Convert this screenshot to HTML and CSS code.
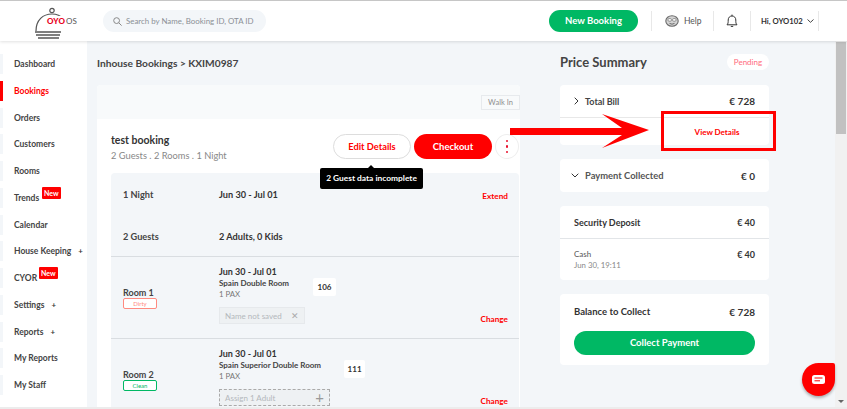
FILE: index.html
```html
<!DOCTYPE html>
<html lang="en">
  <head>
    <meta charset="UTF-8" />
    <title>Booking details</title>
    <link rel="stylesheet" href="styles.css">
  </head>
  <body>
    <div class="header">
      <div class="logo">
        <svg class="logo-bell" width="38" height="33" viewBox="0 0 38 33">
          <circle cx="19" cy="3.5" r="2.2" fill="none" stroke="#555" stroke-width="1.2" />
          <path d="M3 24 C3 13 10 7 19 7 C24 7 28 9 31 12" fill="none" stroke="#555" stroke-width="1.2" />
          <path d="M2 25 H28 M3 28 H27 M5 31 H26" stroke="#555" stroke-width="1.6" />
        </svg>
        <span class="logo-oyo">OYO</span>
        <span class="logo-os">OS</span>
      </div>
      <div class="search">
        <svg width="9" height="9" viewBox="0 0 9 9">
          <circle cx="3.6" cy="3.6" r="2.9" fill="none" stroke="#888" />
          <path d="M5.8 5.8 L8.6 8.6" stroke="#888" />
        </svg>
        <span>Search by Name, Booking ID, OTA ID</span>
      </div>
      <div class="btn-new">New Booking</div>
      <div class="head-item help">
        <svg width="14" height="12" viewBox="0 0 14 12">
          <ellipse cx="7" cy="6" rx="6.2" ry="5.3" fill="#d4d4d4" stroke="#6a6a6a" stroke-width="1.1" />
          <rect x="3" y="3.6" width="3.4" height="2.6" rx="1" fill="#fff" stroke="#6a6a6a" stroke-width="0.7" />
          <rect x="7.6" y="3.6" width="3.4" height="2.6" rx="1" fill="#fff" stroke="#6a6a6a" stroke-width="0.7" />
          <path d="M4.5 8.4 Q7 10 9.5 8.4" fill="none" stroke="#6a6a6a" />
        </svg>
        <span>Help</span>
      </div>
      <div class="head-item bell">
        <svg width="12" height="14" viewBox="0 0 12 14">
          <path d="M1 10.8 C2.2 9.6 2.2 8.4 2.2 6 C2.2 3.6 3.8 2 6 2 C8.2 2 9.8 3.6 9.8 6 C9.8 8.4 9.8 9.6 11 10.8 Z M6 0.6 V2 M4.8 12.4 H7.2" fill="none" stroke="#333" />
        </svg>
      </div>
      <div class="head-item user">
        <span>Hi, OYO102</span>
        <svg width="7" height="4" viewBox="0 0 7 4"><path d="M0.5 0.5 L3.5 3.3 L6.5 0.5" fill="none" stroke="#444" /></svg>
      </div>
    </div>

    <div class="page">
      <div class="sidebar">
        <div class="nav-item">Dashboard</div>
        <div class="nav-item active">Bookings</div>
        <div class="nav-item">Orders</div>
        <div class="nav-item">Customers</div>
        <div class="nav-item">Rooms</div>
        <div class="nav-item">Trends<span class="new new-trends">New</span></div>
        <div class="nav-item">Calendar</div>
        <div class="nav-item">House Keeping<span class="plus">+</span></div>
        <div class="nav-item">CYOR<span class="new new-cyor">New</span></div>
        <div class="nav-item">Settings<span class="plus">+</span></div>
        <div class="nav-item">Reports<span class="plus">+</span></div>
        <div class="nav-item">My Reports</div>
        <div class="nav-item">My Staff</div>
      </div>

      <div class="content">
        <div class="left">
          <div class="title">Inhouse Bookings &gt; KXIM0987</div>
          <div class="card">
            <div class="walk-band"><span class="walk">Walk In</span></div>
            <div class="card-body">
              <div class="book-head">
                <div>
                  <div class="book-name">test booking</div>
                  <div class="book-sub">2 Guests . 2 Rooms . 1 Night</div>
                </div>
                <div class="actions">
                  <div class="btn-edit">Edit Details</div>
                  <div class="btn-checkout">Checkout</div>
                  <div class="btn-more"><i></i><i></i><i></i></div>
                  <div class="tooltip">2 Guest data incomplete</div>
                </div>
              </div>

              <div class="panel">
                <div class="stay">
                  <div class="stay-row">
                    <span class="cell-a">1 Night</span>
                    <span class="cell-b">Jun 30 - Jul 01</span>
                    <span class="link">Extend</span>
                  </div>
                  <div class="stay-row">
                    <span class="cell-a">2 Guests</span>
                    <span class="cell-b">2 Adults, 0 Kids</span>
                  </div>
                </div>

                <div class="room">
                  <div class="room-label">
                    <div>Room 1</div>
                    <div class="badge dirty">Dirty</div>
                  </div>
                  <div class="room-info">
                    <div class="room-top">
                      <div>
                        <div class="room-date">Jun 30 - Jul 01</div>
                        <div class="room-type">Spain Double Room</div>
                        <div class="room-pax">1 PAX</div>
                      </div>
                      <div class="room-no">106</div>
                    </div>
                    <div class="guest-chip">Name not saved <span class="chip-x">&#10005;</span></div>
                  </div>
                  <div class="link change">Change</div>
                </div>

                <div class="room">
                  <div class="room-label">
                    <div>Room 2</div>
                    <div class="badge clean">Clean</div>
                  </div>
                  <div class="room-info">
                    <div class="room-top">
                      <div>
                        <div class="room-date">Jun 30 - Jul 01</div>
                        <div class="room-type">Spain Superior Double Room</div>
                        <div class="room-pax">1 PAX</div>
                      </div>
                      <div class="room-no no-2">111</div>
                    </div>
                    <div class="guest-chip assign">Assign 1 Adult <span class="chip-plus">+</span></div>
                  </div>
                  <div class="link change">Change</div>
                </div>
              </div>
            </div>
          </div>
        </div>

        <div class="right">
          <div class="price-head">
            <div class="price-title">Price Summary</div>
            <div class="pending">Pending</div>
          </div>

          <div class="box">
            <div class="box-row bill">
              <span class="row-name"><svg width="5" height="8" viewBox="0 0 5 8"><path d="M0.7 0.7 L4 4 L0.7 7.3" fill="none" stroke="#333" /></svg>Total Bill</span>
              <span class="amount">&euro; 728</span>
            </div>
            <div class="details-row"></div>
          </div>

          <div class="box">
            <div class="box-row collected">
              <span class="row-name"><svg width="8" height="5" viewBox="0 0 8 5"><path d="M0.7 0.7 L4 4 L7.3 0.7" fill="none" stroke="#333" /></svg>Payment Collected</span>
              <span class="amount">&euro; 0</span>
            </div>
          </div>

          <div class="box">
            <div class="box-row deposit">
              <span class="strong">Security Deposit</span>
              <span class="strong">&euro; 40</span>
            </div>
            <div class="box-row cash">
              <div>
                <div class="cash-name">Cash</div>
                <div class="cash-date">Jun 30, 19:11</div>
              </div>
              <span class="strong">&euro; 40</span>
            </div>
          </div>

          <div class="box balance">
            <div class="balance-row">
              <span class="strong balance-name">Balance to Collect</span>
              <span class="amount">&euro; 728</span>
            </div>
            <div class="btn-collect">Collect Payment</div>
          </div>
        </div>
      </div>

      <div class="scrollbar"><div class="thumb"></div></div>
    </div>

    <!-- annotation drawn on top of the screenshot -->
    <svg class="arrow" width="142" height="36" viewBox="0 0 142 36">
      <polygon points="0,15 112,15 92,1 139,17 92,35 112,22 0,22" fill="#f00" />
    </svg>
    <div class="callout">View Details</div>

    <div class="chat">
      <svg width="13" height="9" viewBox="0 0 13 9">
        <rect width="13" height="9" rx="2.5" fill="#fff" />
        <path d="M2.5 3 H10.5 M2.5 5.8 H8" stroke="#f00" />
      </svg>
    </div>
    <div class="bottom-line"></div>
  </body>
</html>
```

FILE: styles.css
```css
* {
  margin: 0;
  padding: 0;
  box-sizing: border-box;
}
html, body {
  height: 409px;
  overflow: hidden;
}
body {
  position: relative;
  display: flex;
  flex-direction: column;
  font-family: "Lato", "Liberation Sans", sans-serif;
  color: #333;
  background: #f3f6f9;
  border-top: 1px solid #c6c6c6;
}

/* header */
.header {
  height: 40px;
  flex: none;
  display: flex;
  align-items: center;
  background: #fff;
  box-shadow: 0 1px 3px rgba(0, 0, 0, 0.12);
  position: relative;
  z-index: 2;
}
.logo {
  width: 103px;
  height: 40px;
  padding: 5px 0 0 33px;
  display: flex;
  align-items: center;
  position: relative;
}
.logo-bell {
  flex: none;
}
.logo-oyo {
  position: absolute;
  left: 47px;
  top: 15px;
  background: #fff;
  font-size: 8px;
  line-height: 10px;
  font-weight: 900;
  letter-spacing: 0.2px;
  color: #e8001c;
}
.logo-os {
  position: absolute;
  left: 66px;
  top: 15px;
  font-size: 8px;
  line-height: 10px;
  color: #555;
}
.search {
  width: 163px;
  height: 22px;
  border-radius: 11px;
  background: #f3f6f9;
  display: flex;
  align-items: center;
  gap: 4px;
  padding-left: 10px;
  font-size: 7.9px;
  color: #8b9096;
}
.btn-new {
  width: 89px;
  height: 22px;
  margin-left: 283px;
  border-radius: 11px;
  background: #00b864;
  color: #fff;
  font-size: 9.5px;
  font-weight: 700;
  text-align: center;
  line-height: 22px;
}
.head-item {
  height: 20px;
  display: flex;
  align-items: center;
  border-left: 1px solid #e8e8e8;
}
.help {
  width: 62px;
  margin-left: 13px;
  padding-left: 13px;
  gap: 5px;
  font-size: 8.5px;
  color: #555;
}
.bell {
  width: 37px;
  padding-left: 12px;
}
.user {
  width: 69px;
  padding-left: 10px;
  gap: 4px;
  font-size: 7.7px;
  font-weight: 700;
  border-right: 1px solid #e8e8e8;
}

/* sidebar */
.page {
  flex: 1;
  display: flex;
  min-height: 0;
}
.sidebar {
  width: 87px;
  flex: none;
  background: #fff;
  padding-top: 13px;
  display: flex;
  flex-direction: column;
  gap: 6.75px;
}
.nav-item {
  height: 20px;
  display: flex;
  align-items: center;
  border-left: 3px solid #f3f6f9;
  padding-left: 11px;
  font-size: 8.5px;
  font-weight: 700;
  color: #444;
  white-space: nowrap;
  position: relative;
}
.nav-item.active {
  border-left-color: #f00;
  color: #f00;
}
.plus {
  margin-left: 7px;
  font-size: 8px;
  color: #333;
}
.new {
  position: absolute;
  top: -1px;
  background: #f00;
  color: #fff;
  font-size: 7px;
  font-weight: 700;
  line-height: 12px;
  padding: 0 2px;
  border-radius: 1px;
}
.new-trends {
  left: 39px;
}
.new-cyor {
  left: 36px;
}

/* main column */
.content {
  flex: 1;
  display: flex;
  gap: 40px;
  padding-left: 10px;
  min-width: 0;
}
.left {
  width: 423px;
  flex: none;
}
.title {
  height: 44px;
  padding-top: 14px;
  font-size: 10.2px;
  line-height: 16px;
  font-weight: 700;
  color: #444;
}
.card {
  background: #fff;
  border-radius: 4px;
}
.walk-band {
  height: 34px;
  background: #f8fafb;
  border-radius: 4px 4px 0 0;
  display: flex;
  justify-content: flex-end;
  align-items: center;
}
.walk {
  width: 39px;
  height: 15px;
  border: 1px solid #e7eaed;
  color: #8f8f8f;
  font-size: 7.5px;
  font-weight: 400;
  text-align: center;
  line-height: 13px;
}
.card-body {
  padding: 15px 1px 0 14px;
}
.book-head {
  height: 39px;
  display: flex;
  justify-content: space-between;
}
.book-name {
  font-size: 10.5px;
  line-height: 12px;
  font-weight: 700;
  color: #333;
}
.book-sub {
  margin-top: 4px;
  font-size: 9.3px;
  line-height: 12px;
  color: #888;
}
.actions {
  display: flex;
  gap: 3px;
  height: 25px;
  position: relative;
}
.btn-edit {
  width: 78px;
  border: 1px solid #ddd;
  border-radius: 13px;
  color: #f00;
  font-size: 9.3px;
  font-weight: 700;
  text-align: center;
  line-height: 23px;
}
.btn-checkout {
  width: 78px;
  border-radius: 13px;
  background: #f00;
  color: #fff;
  font-size: 9.5px;
  font-weight: 700;
  text-align: center;
  line-height: 25px;
}
.btn-more {
  width: 24px;
  border: 1px solid #eee;
  border-radius: 50%;
  display: flex;
  flex-direction: column;
  align-items: center;
  justify-content: center;
  gap: 3px;
}
.btn-more i {
  width: 2.5px;
  height: 2.5px;
  border-radius: 50%;
  background: #e8112d;
}
.tooltip {
  position: absolute;
  left: -13px;
  top: 34px;
  width: 103px;
  height: 21px;
  background: #000;
  color: #fff;
  border-radius: 2px;
  font-size: 8.4px;
  font-weight: 700;
  text-align: center;
  line-height: 21px;
  z-index: 3;
}
.tooltip::before {
  content: "";
  position: absolute;
  left: 48px;
  top: -3px;
  border-left: 3px solid transparent;
  border-right: 3px solid transparent;
  border-bottom: 3px solid #000;
}

/* stay and rooms */
.panel {
  background: #f3f6f9;
  border-radius: 4px 4px 0 0;
  font-size: 9.2px;
}
.stay {
  height: 83px;
  padding: 14px 11px 13px 12px;
  display: flex;
  flex-direction: column;
  justify-content: space-between;
}
.stay-row {
  height: 14px;
  display: flex;
  align-items: center;
}
.stay .link {
  margin-top: 3px;
}
.cell-a {
  width: 96px;
  color: #444;
  font-weight: 700;
}
.cell-b {
  flex: 1;
  color: #333;
  font-weight: 700;
}
.link {
  color: #f00;
  font-size: 8.2px;
  font-weight: 700;
}
.room {
  height: 82px;
  border-top: 1px solid #d9dde1;
  display: flex;
  padding: 10px 11px 0 12px;
}
.room-label {
  width: 96px;
  padding-top: 20px;
  font-size: 9px;
  line-height: 11px;
  font-weight: 700;
  color: #444;
}
.badge {
  width: 34px;
  height: 11px;
  border: 1px solid;
  border-radius: 2px;
  background: #fff;
  font-size: 6px;
  font-weight: 400;
  text-align: center;
  line-height: 9px;
}
.dirty {
  border-color: #ff8a80;
  color: #ff8a80;
}
.clean {
  border-color: #00b864;
  color: #00b864;
}
.room-info {
  flex: 1;
}
.room-top {
  display: flex;
  height: 34px;
}
.room-date {
  margin: -1px 0 1px;
  font-size: 9px;
  line-height: 11px;
  font-weight: 700;
  color: #333;
}
.room-type {
  font-size: 8px;
  line-height: 11px;
  font-weight: 700;
  color: #444;
}
.room-pax {
  font-size: 7.8px;
  line-height: 11px;
  color: #777;
}
.room-no {
  width: 23px;
  height: 18px;
  margin: 11px 0 0 24px;
  background: #fff;
  border-radius: 2px;
  font-size: 8px;
  font-weight: 700;
  text-align: center;
  line-height: 18px;
}
.no-2 {
  width: 21px;
  margin-left: 23px;
}
.guest-chip {
  width: 86px;
  height: 17px;
  margin-top: 6px;
  padding: 0 5px;
  background: #eef1f3;
  border: 1px solid #e6e9ec;
  display: flex;
  justify-content: space-between;
  align-items: center;
  font-size: 8px;
  color: #b4b8bc;
}
.assign {
  width: 111px;
  border: 1px dashed #aaa;
}
.chip-plus {
  font-size: 15px;
  line-height: 15px;
  color: #999;
}
.chip-x {
  font-size: 9px;
  color: #aaa;
}
.change {
  align-self: flex-end;
  margin-bottom: 14px;
}

/* price summary */
.right {
  width: 209px;
  flex: none;
}
.price-head {
  height: 44px;
  padding-top: 12px;
  display: flex;
  justify-content: space-between;
  align-items: flex-start;
}
.price-title {
  font-size: 13px;
  line-height: 18px;
  font-weight: 700;
  color: #444;
}
.pending {
  width: 42px;
  height: 16px;
  margin-top: 1px;
  border-radius: 8px;
  background: #fff;
  color: #ff6b7d;
  font-size: 8px;
  text-align: center;
  line-height: 16px;
}
.box {
  background: #fff;
  border-radius: 4px;
  margin-bottom: 14px;
}
.box-row {
  display: flex;
  justify-content: space-between;
  padding: 0 14px;
}
.bill {
  height: 33px;
  align-items: center;
  border-bottom: 1px solid #e8e8e8;
}
.details-row {
  height: 27px;
}
.collected {
  height: 33px;
  align-items: center;
}
.collected svg {
  margin-left: -3px;
}
.row-name {
  display: flex;
  align-items: center;
  gap: 6px;
  font-size: 9px;
  font-weight: 700;
  color: #444;
}
.collected .row-name {
  font-size: 9.4px;
  color: #555;
}
.amount {
  font-size: 10px;
  font-weight: 700;
  color: #333;
}
.strong {
  font-size: 9px;
  font-weight: 700;
  color: #333;
}
.balance-name {
  font-size: 9.5px;
}
.deposit {
  height: 33px;
  align-items: center;
  border-bottom: 1px solid #e2e5e8;
}
.cash {
  height: 41px;
  padding-top: 10px;
}
.cash-name {
  font-size: 8px;
  line-height: 11px;
  color: #555;
}
.cash-date {
  font-size: 7.8px;
  line-height: 11px;
  color: #888;
}
.balance {
  height: 71px;
  padding: 11px 14px 0;
}
.balance-row {
  display: flex;
  justify-content: space-between;
  align-items: center;
  height: 13px;
}
.btn-collect {
  height: 24px;
  margin-top: 13px;
  border-radius: 12px;
  background: #00b864;
  color: #fff;
  font-size: 9.5px;
  font-weight: 700;
  text-align: center;
  line-height: 24px;
}
.scrollbar {
  width: 12px;
  flex: none;
  background: #f1f1f1;
  position: relative;
}
.scrollbar::after {
  content: "";
  position: absolute;
  left: 3px;
  bottom: 6px;
  border-left: 3px solid transparent;
  border-right: 3px solid transparent;
  border-top: 3px solid #666;
}
.thumb {
  width: 10px;
  height: 92px;
  margin: 1px 0 0 1px;
  background: #c1c1c1;
}

/* overlays */
.arrow {
  position: absolute;
  left: 510px;
  top: 112px;
  z-index: 4;
}
.callout {
  position: absolute;
  left: 661px;
  top: 110px;
  width: 115px;
  height: 40px;
  padding-right: 3px;
  border: 3px solid #f00;
  color: #f00;
  font-size: 8px;
  font-weight: 700;
  text-align: center;
  line-height: 36px;
  z-index: 4;
}
.chat {
  position: absolute;
  left: 802px;
  top: 362px;
  width: 33px;
  height: 33px;
  background: #f00;
  border-radius: 50% 2px 50% 50%;
  box-shadow: 0 2px 3px rgba(0, 0, 0, 0.3);
  display: flex;
  align-items: center;
  justify-content: center;
  z-index: 4;
}
.bottom-line {
  position: absolute;
  left: 0;
  right: 0;
  bottom: 0;
  height: 2px;
  background: #ececec;
  z-index: 5;
}
```
